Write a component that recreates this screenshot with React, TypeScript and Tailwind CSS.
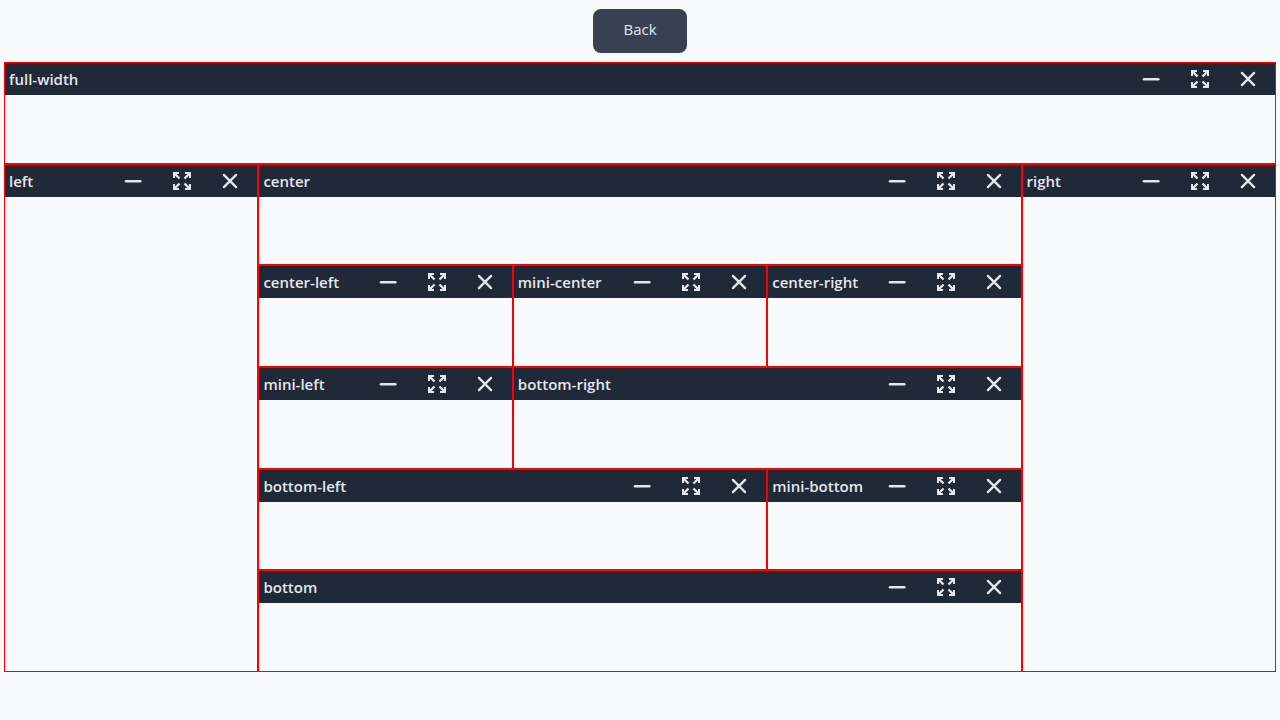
const panels = [
  { name: 'full-width', area: 'col-span-5' },
  { name: 'left', area: 'row-span-5' },
  { name: 'center', area: 'col-span-3' },
  { name: 'right', area: 'row-span-5' },
  { name: 'center-left', area: '' },
  { name: 'mini-center', area: '' },
  { name: 'center-right', area: '' },
  { name: 'mini-left', area: '' },
  { name: 'bottom-right', area: 'col-span-2' },
  { name: 'bottom-left', area: 'col-span-2' },
  { name: 'mini-bottom', area: '' },
  { name: 'bottom', area: 'col-span-3' },
];

function MinimizeIcon() {
  return (
    <svg viewBox="0 0 24 24" className="size-6" fill="none" stroke="currentColor" strokeWidth="2.5" strokeLinecap="round" aria-hidden="true">
      <path d="M4 12.2H18.3" />
    </svg>
  );
}

function ExpandIcon() {
  return (
    <svg viewBox="0 0 24 24" className="size-6" fill="none" stroke="currentColor" strokeWidth="2" aria-hidden="true">
      <path d="M9 4H4V9M15 4H20V9M9 20H4V15M15 20H20V15" />
      <path strokeWidth="2.4" d="M4 4L9.5 9.5M20 4L14.5 9.5M4 20L9.5 14.5M20 20L14.5 14.5" />
    </svg>
  );
}

function CloseIcon() {
  return (
    <svg viewBox="0 0 24 24" className="size-6" fill="none" stroke="currentColor" strokeWidth="2.3" strokeLinecap="round" aria-hidden="true">
      <path d="M5.9 5.9L18.1 18.1M18.1 5.9L5.9 18.1" />
    </svg>
  );
}

function Panel({ name, area }: { name: string; area: string }) {
  return (
    <section className={`min-w-0 border border-[#ff0000] ${area}`}>
      <header className="flex h-8 items-center justify-between bg-[#1f2937] pl-1 pr-[3px] text-[#e5e7eb]">
        <h2 className="whitespace-nowrap text-[15px] leading-6 font-semibold">{name}</h2>
        <div className="flex">
          <button type="button" aria-label={`Minimize ${name}`} className="flex w-12 justify-center"><MinimizeIcon /></button>
          <button type="button" aria-label={`Expand ${name}`} className="flex w-12 justify-center"><ExpandIcon /></button>
          <button type="button" aria-label={`Close ${name}`} className="flex w-12 justify-center"><CloseIcon /></button>
        </div>
      </header>
    </section>
  );
}

export default function App() {
  return (
    <div className="flex min-h-screen flex-col bg-[#f9fafc] font-['Open_Sans',sans-serif]">
      <nav className="flex justify-center pt-[9px] pb-[9px]">
        <button type="button" className="h-11 rounded-lg bg-[#374151] px-[30px] pb-1 text-[15px] leading-6 text-[#e5e7eb]">Back</button>
      </nav>
      <main className="mb-12 grid flex-1 grid-cols-5 grid-rows-6 px-1">
        {panels.map((panel) => (
          <Panel key={panel.name} name={panel.name} area={panel.area} />
        ))}
      </main>
    </div>
  );
}
